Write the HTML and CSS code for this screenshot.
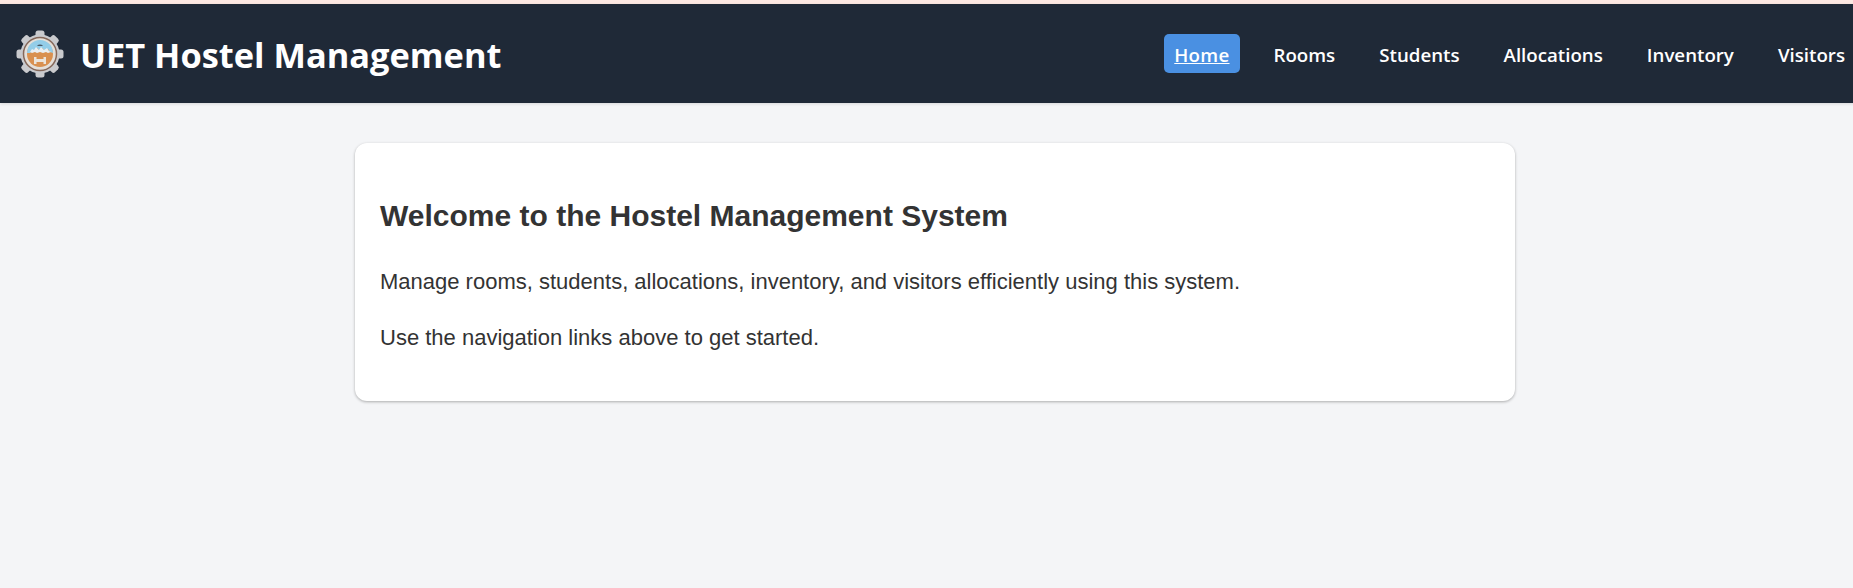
FILE: index.html
```html
<!DOCTYPE html>
<html lang="en">
<head>
<meta charset="utf-8">
<title>UET Hostel Management</title>
<link rel="stylesheet" href="styles.css">
</head>
<body>
<div class="page">
<header class="topbar">
  <div class="brand">
    <svg class="logo" viewBox="0 0 48 48" aria-hidden="true">
      <g fill="#c9cacd">
        <circle cx="24" cy="24" r="19.500"/>
        <rect x="19.500" y="0.500" width="9" height="9" rx="2.500"/>
        <rect x="19.500" y="0.500" width="9" height="9" rx="2.500" transform="rotate(45 24 24)"/>
        <rect x="19.500" y="0.500" width="9" height="9" rx="2.500" transform="rotate(90 24 24)"/>
        <rect x="19.500" y="0.500" width="9" height="9" rx="2.500" transform="rotate(135 24 24)"/>
        <rect x="19.500" y="0.500" width="9" height="9" rx="2.500" transform="rotate(180 24 24)"/>
        <rect x="19.500" y="0.500" width="9" height="9" rx="2.500" transform="rotate(225 24 24)"/>
        <rect x="19.500" y="0.500" width="9" height="9" rx="2.500" transform="rotate(270 24 24)"/>
        <rect x="19.500" y="0.500" width="9" height="9" rx="2.500" transform="rotate(315 24 24)"/>
      </g>
      <circle cx="24" cy="24" r="16.500" fill="#e4dfd8" stroke="#85685a" stroke-width="1.500"/>
      <circle cx="24" cy="24" r="13" fill="#d9904f"/>
      <path d="M11 23a13 13 0 0 1 26 0l-3-1-2-3-3 2-3-3-2 3-3-3-2 3-2-1-3 3z" fill="#93cde8"/>
      <path d="M14 22l2-3 2 1 2-3 3 3 2-3 3 3 3-2 2 3 2 1-3 1-2-1-3 1-3-1-3 1-2-1-3 1z" fill="#e9eff3"/>
      <path d="M21 15.500q3-2 6 0l-1 .5h-4z" fill="#4a5a68"/>
      <path d="M18 27h2.500v2h7v-2H30v7h-2.500v-2h-7v2H18z" fill="#ebe4da"/>
    </svg>
    <span class="brand-name">UET Hostel Management</span>
  </div>
  <nav class="nav">
    <a class="nav-link active" href="#">Home</a>
    <a class="nav-link" href="#">Rooms</a>
    <a class="nav-link" href="#">Students</a>
    <a class="nav-link" href="#">Allocations</a>
    <a class="nav-link" href="#">Inventory</a>
    <a class="nav-link" href="#">Visitors</a>
  </nav>
</header>
<main class="content">
  <section class="card">
    <h2 class="card-title">Welcome to the Hostel Management System</h2>
    <p class="card-text">Manage rooms, students, allocations, inventory, and visitors efficiently using this system.</p>
    <p class="card-text">Use the navigation links above to get started.</p>
  </section>
</main>
</div>
</body>
</html>
```
FILE: styles.css
```css
* { box-sizing: border-box; }
html, body { margin: 0; height: 100%; overflow: hidden; }
body {
  background: #f4f5f7;
  color: #333;
  font-family: "Liberation Sans", Arial, sans-serif;
}
.page {
  width: 1870px;
  border-top: 4px solid #fde8e2;
}
.topbar {
  height: 99px;
  background: #1f2937;
  display: flex;
  align-items: center;
  justify-content: space-between;
  padding: 0 15px 0 16px;
  box-shadow: 0 1px 3px rgba(0,0,0,.12);
}
.brand { display: flex; align-items: center; gap: 16px; }
.logo { width: 48px; height: 48px; display: block; }
.brand-name {
  font-family: "Open Sans", sans-serif;
  font-size: 34.4px;
  font-weight: 700;
  color: #fff;
  padding-top: 1px;
}
.nav { display: flex; align-items: center; gap: 24px; }
.nav-link {
  font-family: "Open Sans", sans-serif;
  font-size: 18.7px;
  line-height: 37px;
  font-weight: 600;
  color: #fff;
  text-decoration: none;
  padding: 2px 10px 0;
  border-radius: 5px;
}
.nav-link.active { background: #4a90e2; text-decoration: underline; letter-spacing: .3px; }
.content { padding-top: 40px; }
.card {
  width: 1160px;
  margin: 0 auto;
  background: #fff;
  border-radius: 12px;
  padding: 25px;
  box-shadow: 0 1px 3px rgba(0,0,0,.3);
}
.card-title { margin: 31px 0 34px; font-size: 30px; line-height: 34px; font-weight: 700; color: #333; }
.card-text { margin: 0 0 26px; font-size: 22px; line-height: 30px; }
.card-text:last-child { margin-bottom: 23px; }
```
